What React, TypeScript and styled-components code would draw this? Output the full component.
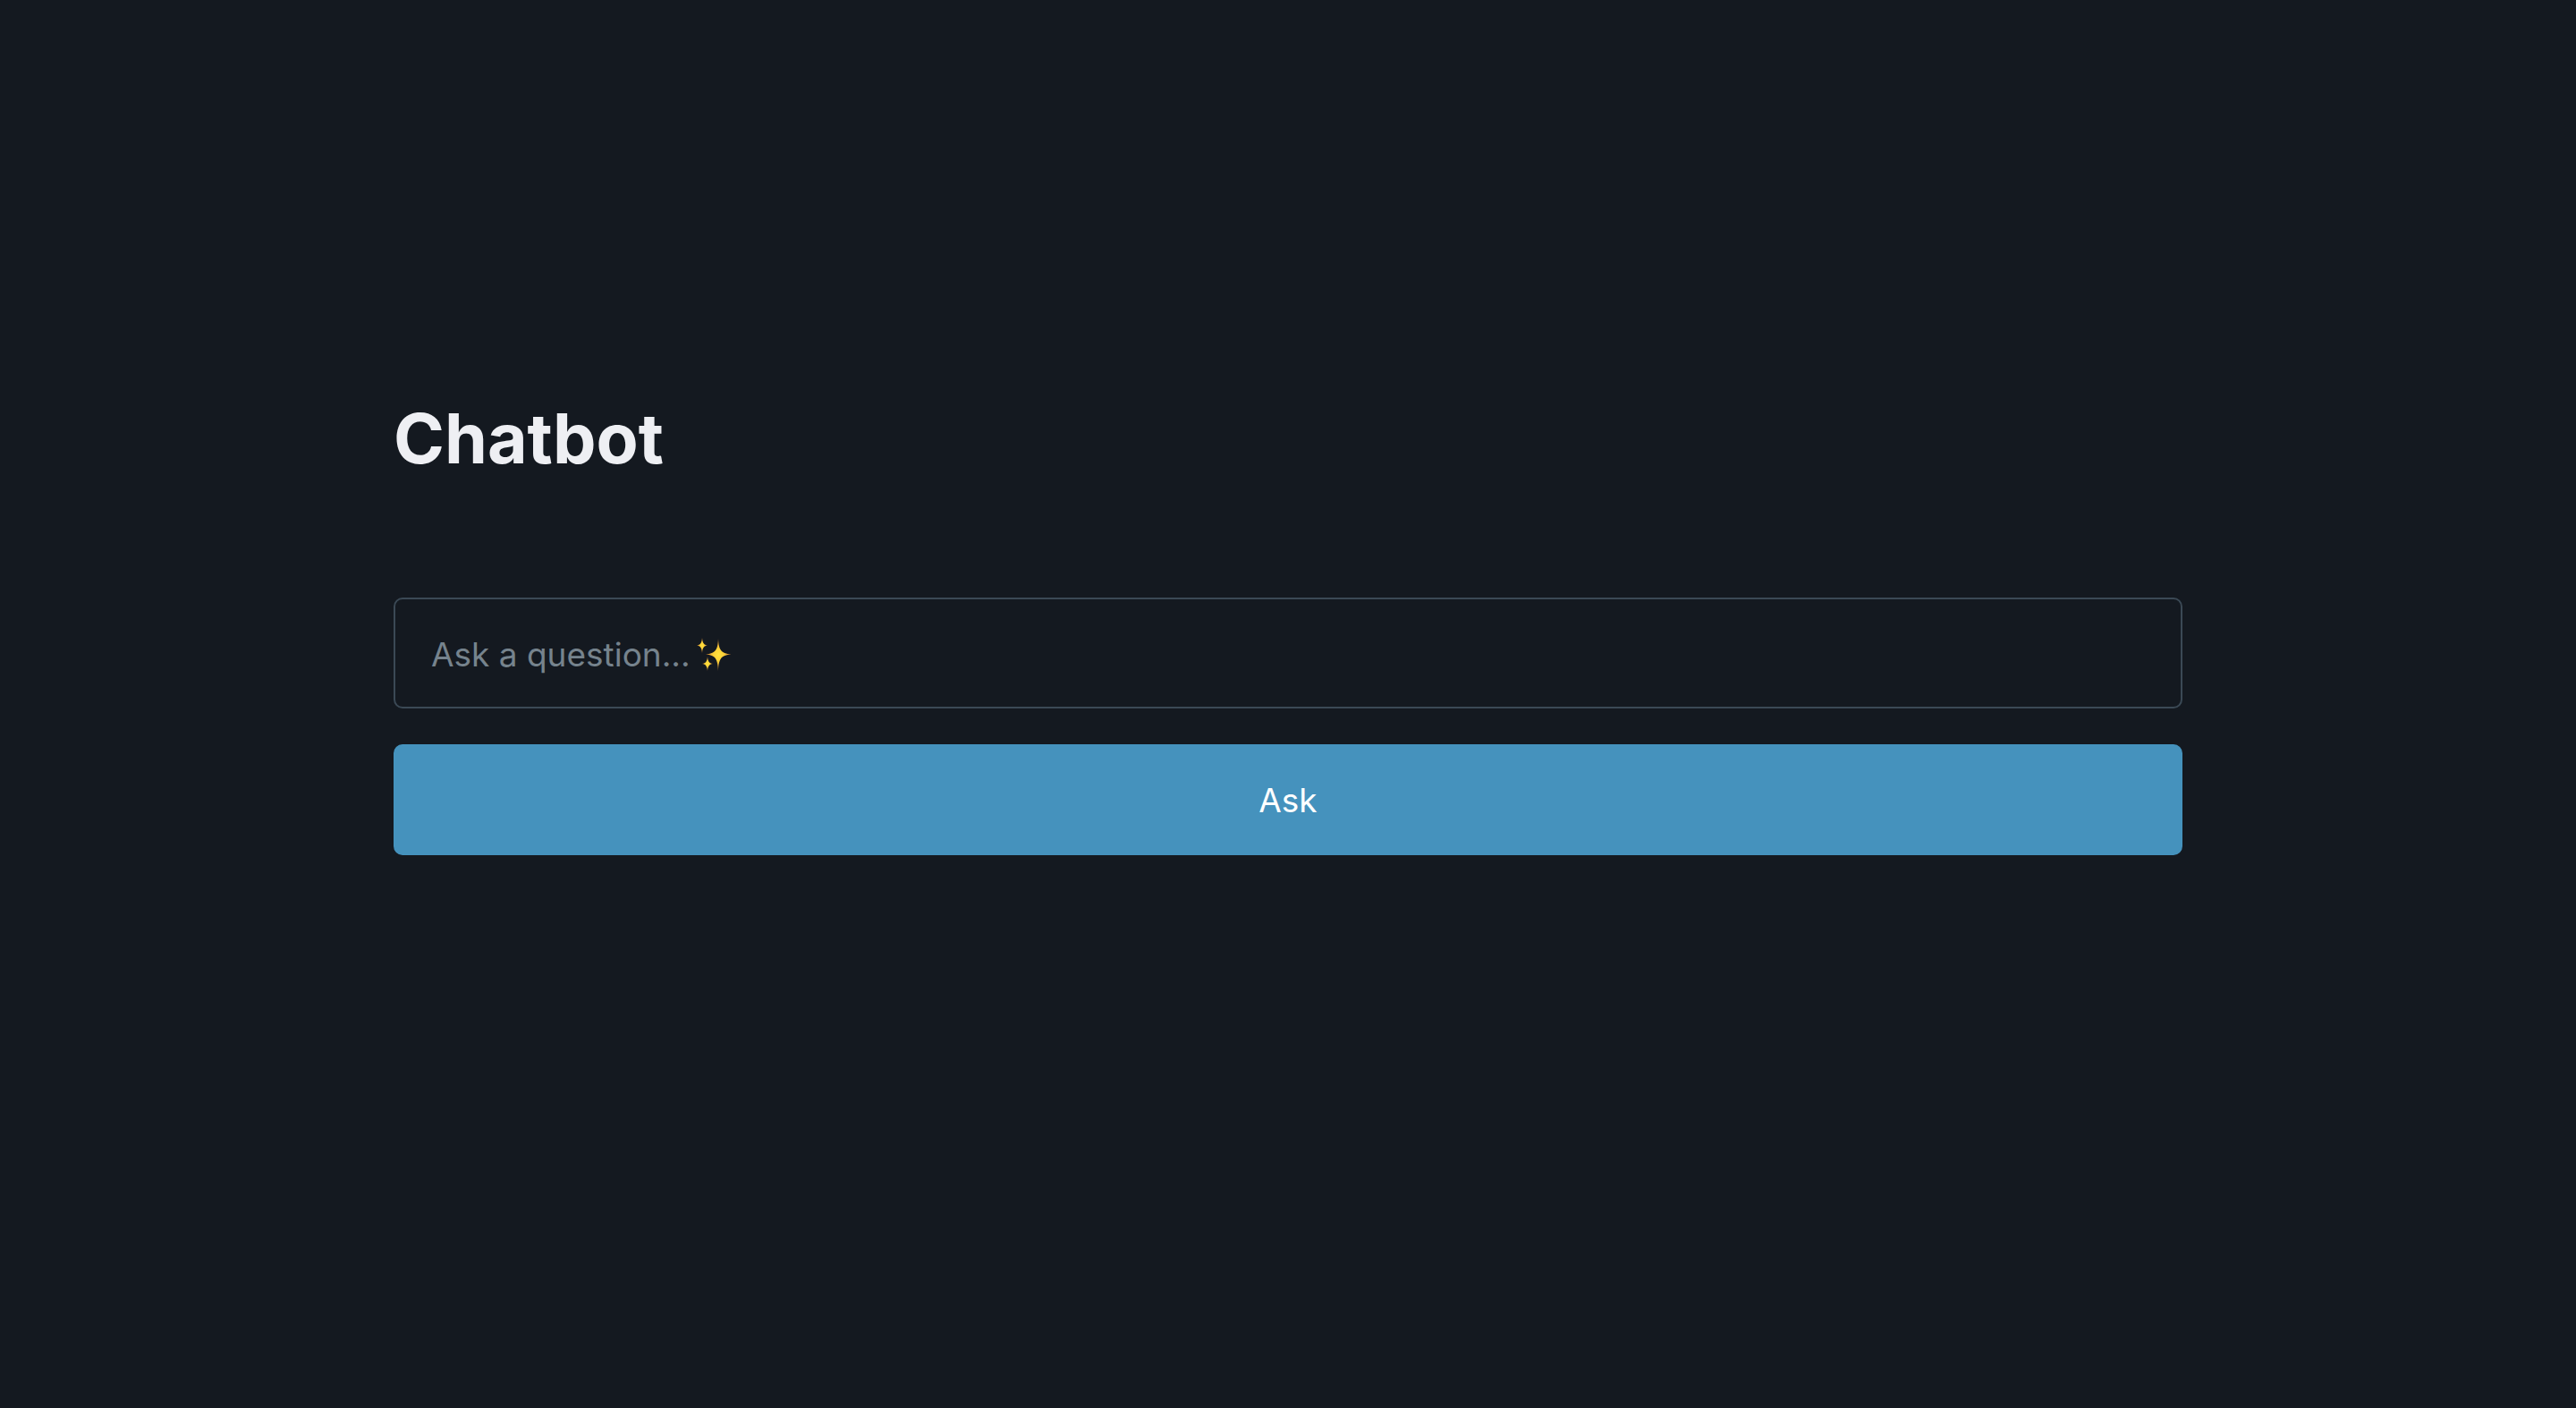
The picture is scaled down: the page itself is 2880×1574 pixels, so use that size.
import React, { useState } from "react";
import styled, { createGlobalStyle } from "styled-components";

const GlobalStyle = createGlobalStyle`
  *, *::before, *::after { box-sizing: border-box; }
  body {
    margin: 0;
    background: #141920;
    color: #eeeff3;
    font-family: Inter, "Liberation Sans", sans-serif;
    font-size: 37px;
    line-height: 60px;
  }
`;

const Page = styled.main`
  width: 100%;
  max-width: 2080px;
  margin: 0 auto;
  padding: 440px 40px 80px;
`;

const Title = styled.h1`
  margin: 0 0 128px;
  font-size: 77px;
  line-height: 100px;
  font-weight: 700;
`;

const Form = styled.form`
  display: flex;
  flex-direction: column;
  gap: 40px;
`;

const Field = styled.div`
  position: relative;
  display: flex;
`;

const TextInput = styled.input`
  flex: 1;
  min-width: 0;
  height: 124px;
  padding: 2px 40px 0;
  border: 2px solid #3b4955;
  border-radius: 10px;
  background: transparent;
  color: #eeeff3;
  font: inherit;

  &::placeholder {
    color: #76838d;
    opacity: 1;
  }

  &:not(:placeholder-shown) + svg {
    display: none;
  }
`;

const Sparkles = styled.svg`
  position: absolute;
  left: 338px;
  top: 44px;
  width: 40px;
  height: 40px;
  pointer-events: none;
`;

const SubmitButton = styled.button`
  height: 124px;
  padding: 2px 40px 0;
  border: 2px solid #4592bd;
  border-radius: 10px;
  background: #4592bd;
  color: #ffffff;
  font: inherit;
  cursor: pointer;
`;

export default function App() {
  const [question, setQuestion] = useState("");

  return (
    <>
      <GlobalStyle />
      <Page>
        <Title>Chatbot</Title>
        <Form onSubmit={(event) => event.preventDefault()}>
          <Field>
            <TextInput
              type="text"
              aria-label="Ask a question"
              placeholder="Ask a question..."
              value={question}
              onChange={(event) => setQuestion(event.target.value)}
            />
            <Sparkles viewBox="0 0 40 40" aria-hidden="true">
              <defs>
                <radialGradient id="spark">
                  <stop offset="0" stopColor="#ffe23d" />
                  <stop offset="0.4" stopColor="#fbd038" />
                  <stop offset="1" stopColor="#c87a34" />
                </radialGradient>
              </defs>
              <g fill="url(#spark)">
                <path d="M25 2C25.600 14.500 28 18.500 39.500 19.500C28 20.500 25.600 24.500 25 38C24.400 24.500 22 20.500 11 19.500C22 18.500 24.400 14.500 25 2Z" />
                <path d="M7 1C7.500 7 9 9 13 9.500C9 10 7.500 12 7 18C6.500 12 5 10 1 9.500C5 9 6.500 7 7 1Z" />
                <path d="M13 22C13.500 27.500 15 29.500 19 30C15 30.500 13.500 32.500 13 38C12.500 32.500 11 30.500 7 30C11 29.500 12.500 27.500 13 22Z" />
              </g>
            </Sparkles>
          </Field>
          <SubmitButton type="submit">Ask</SubmitButton>
        </Form>
      </Page>
    </>
  );
}
